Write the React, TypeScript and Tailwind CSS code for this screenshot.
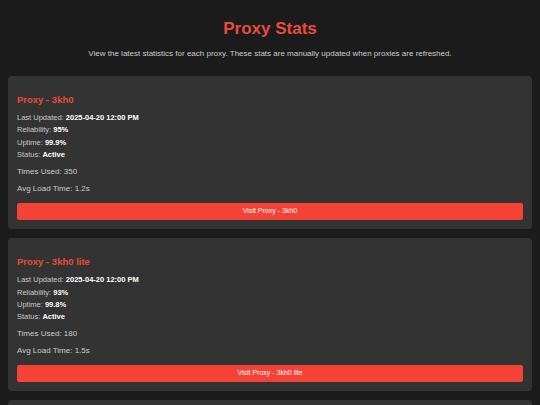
import React from "react";

type Proxy = {
    name: string;
    updated: string;
    reliability: string;
    uptime: string;
    status: string;
    used: number;
    load: string;
};

const proxies: Proxy[] = [
    { name: "3kh0", updated: "2025-04-20 12:00 PM", reliability: "95%", uptime: "99.9%", status: "Active", used: 350, load: "1.2s" },
    { name: "3kh0 lite", updated: "2025-04-20 12:00 PM", reliability: "93%", uptime: "99.8%", status: "Active", used: 180, load: "1.5s" },
    { name: "Interstellar", updated: "2025-04-20 12:00 PM", reliability: "90%", uptime: "99.5%", status: "Active", used: 120, load: "1.8s" },
];

const ProxyCard = ({ proxy }: { proxy: Proxy }) => {
    return (
        <div className="rounded-[4px] bg-[#333333] px-[9px] pt-[8.7px] pb-[8.2px]">
            <h2 className="mt-[9px] text-[9.5px] leading-[11px] font-bold text-[#e74c3c]">
                Proxy - {proxy.name}
            </h2>

            <div className="mt-[7.5px] text-[7.5px] leading-[12.3px] text-[#c8c8c8]">
                <div>Last Updated: <strong className="font-bold text-white">{proxy.updated}</strong></div>
                <div>Reliability: <strong className="font-bold text-white">{proxy.reliability}</strong></div>
                <div>Uptime: <strong className="font-bold text-white">{proxy.uptime}</strong></div>
                <div>Status: <strong className="font-bold text-white">{proxy.status}</strong></div>
            </div>

            <p className="mt-[5px] text-[8px] leading-[12px] text-[#cccccc]">Times Used: {proxy.used}</p>
            <p className="mt-[5px] text-[8px] leading-[12px] text-[#cccccc]">Avg Load Time: {proxy.load}</p>

            <button type="button" className="mt-[7.4px] flex h-[17.6px] w-full items-center justify-center rounded-[2px] bg-[#f44336] text-[7px] text-white">
                Visit Proxy - {proxy.name}
            </button>
        </div>
    );
};

export default function App() {
    return (
        <div className="min-h-screen bg-[#1b1b1b] px-[8px] pt-[19px] pb-4 font-['Liberation_Sans',Arial,sans-serif]">
            <h1 className="text-center text-[17px] leading-[20px] font-bold text-[#e74c3c]">
                Proxy Stats
            </h1>
            <p className="mt-[10px] text-center text-[8px] leading-[10px] text-[#cccccc]">
                View the latest statistics for each proxy. These stats are manually updated when proxies are refreshed.
            </p>

            <div className="mt-[17px] flex flex-col gap-[9.5px]">
                {
                    proxies.map(proxy => (
                        <ProxyCard proxy={proxy} key={proxy.name} />
                    ))
                }
            </div>
        </div>
    );
}
